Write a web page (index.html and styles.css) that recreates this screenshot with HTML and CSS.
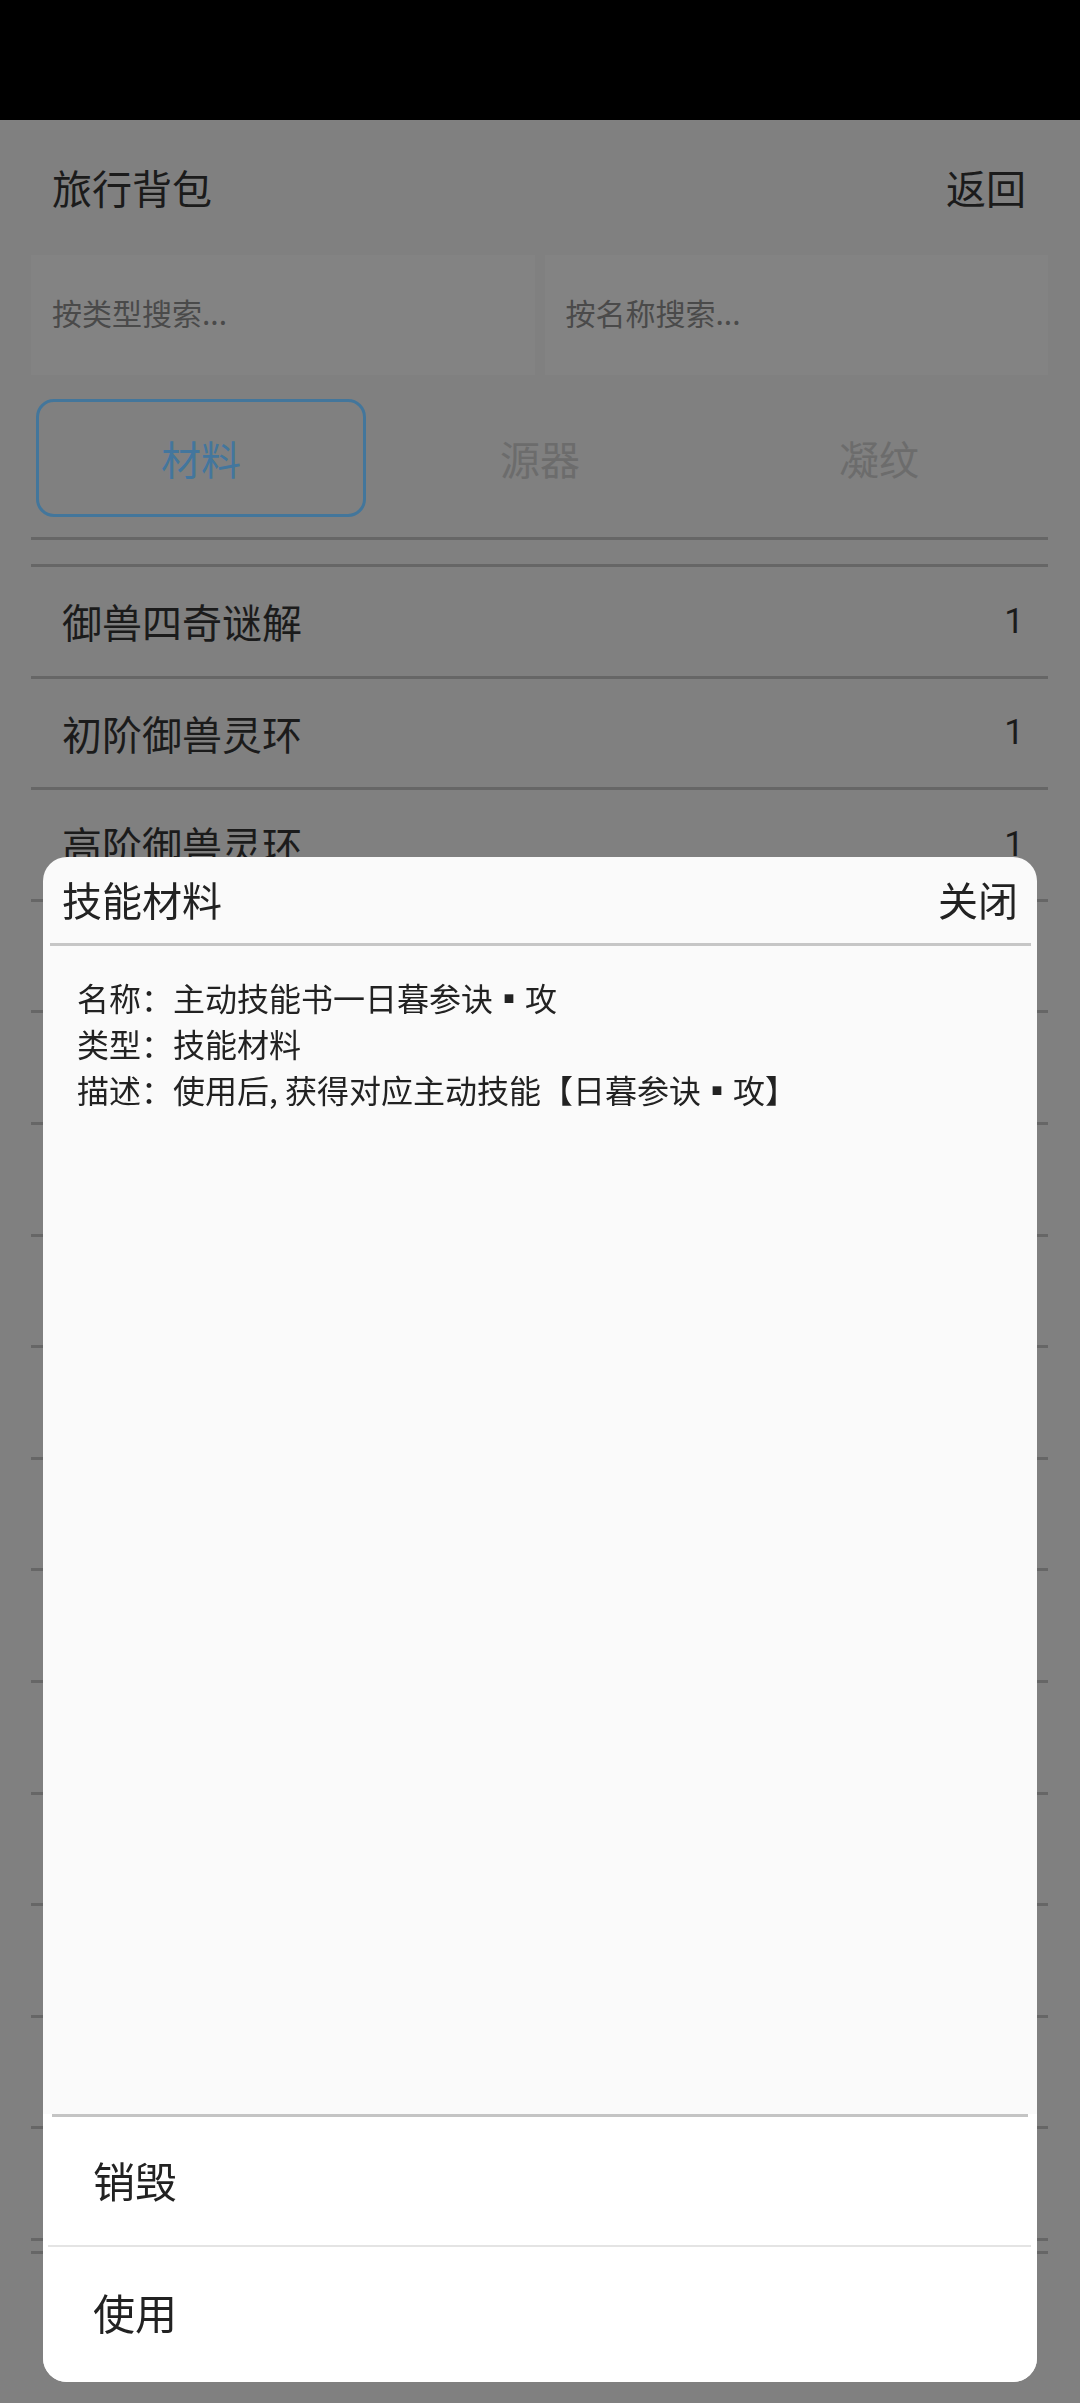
FILE: index.html
```html
<!DOCTYPE html>
<html lang="zh-CN">
<head>
<meta charset="utf-8">
<title>旅行背包</title>
<link rel="stylesheet" href="styles.css">
</head>
<body>
<div class="statusbar"></div>
<main class="page">
  <header class="topbar">
    <h1 class="title">旅行背包</h1>
    <span class="back">返回</span>
  </header>
  <div class="searches">
    <div class="search">按类型搜索...</div>
    <div class="search">按名称搜索...</div>
  </div>
  <nav class="tabs">
    <div class="tab active">材料</div>
    <div class="tab">源器</div>
    <div class="tab">凝纹</div>
  </nav>
  <div class="list">
    <div class="row"><span>御兽四奇谜解</span><span class="count">1</span></div>
    <div class="row"><span>初阶御兽灵环</span><span class="count">1</span></div>
    <div class="row"><span>高阶御兽灵环</span><span class="count">1</span></div>
    <div class="row"></div>
    <div class="row"></div>
    <div class="row"></div>
    <div class="row"></div>
    <div class="row"></div>
    <div class="row"></div>
    <div class="row"></div>
    <div class="row"></div>
    <div class="row"></div>
    <div class="row"></div>
    <div class="row"></div>
    <div class="row"></div>
  </div>
  <div class="list-end"></div>
</main>

<div class="sheet">
  <div class="sheet-head">
    <span>技能材料</span>
    <span class="close">关闭</span>
  </div>
  <div class="sheet-body">
    <p class="info">名称：主动技能书一日暮参诀▪攻</p>
    <p class="info">类型：技能材料</p>
    <p class="info">描述：使用后, 获得对应主动技能【日暮参诀▪攻】</p>
  </div>
  <div class="sheet-actions">
    <div class="action">销毁</div>
    <div class="action">使用</div>
  </div>
</div>
</body>
</html>
```

FILE: styles.css
```css
* { box-sizing: border-box; }

html, body {
  margin: 0;
  padding: 0;
}

body {
  background: #808080;
  font-family: "Noto Sans CJK SC", "Noto Sans", sans-serif;
  color: #1b1b1b;
  width: 1080px;
  height: 2403px;
  overflow: hidden;
}

.statusbar {
  height: 120px;
  background: #000;
}

.page {
  display: flex;
  flex-direction: column;
}

.topbar {
  height: 135px;
  display: flex;
  align-items: center;
  justify-content: space-between;
  padding: 0 54px 2px 52px;
}

.title {
  margin: 0;
  font-size: 40px;
  font-weight: 400;
  line-height: 1;
}

.back {
  font-size: 40px;
  line-height: 1;
}

.searches {
  display: flex;
  gap: 10px;
  padding: 0 32px 0 31px;
}

.search {
  flex: 1;
  height: 120px;
  background: #838383;
  display: flex;
  align-items: center;
  padding: 0 0 6px 21px;
  font-size: 30px;
  color: #4a4a4a;
}

.tabs {
  display: flex;
  padding: 0 32px 0 31px;
  margin-top: 24px;
}

.tab {
  flex: 1;
  height: 118px;
  margin: 0 4px 0 5px;
  border: 3px solid transparent;
  border-radius: 18px;
  display: flex;
  align-items: center;
  justify-content: center;
  font-size: 40px;
  color: #6c6c6c;
}

.tab.active {
  border-color: #43769b;
  color: #43769d;
}

.list {
  margin: 20px 32px 0 31px;
  border-top: 3px solid #666;
  padding-top: 24px;
}

.list::before {
  content: "";
  display: block;
  height: 3px;
  background: #666;
}

.row {
  height: 111.6px;
  border-bottom: 3px solid #666;
  display: flex;
  align-items: center;
  justify-content: space-between;
  padding: 0 24px 0 31px;
  font-size: 40px;
}

.count {
  font-family: Roboto, "Noto Sans", sans-serif;
  font-size: 35px;
}

.list-end {
  margin: 10px 32px 0 31px;
  height: 3px;
  background: #666;
}

/* bottom sheet dialog overlaying the list */
.sheet {
  position: fixed;
  left: 43px;
  right: 43px;
  top: 857px;
  bottom: 21px;
  background: #fafafa;
  border-radius: 24px;
  overflow: hidden;
  display: flex;
  flex-direction: column;
  color: #222;
}

.sheet-head {
  height: 89px;
  flex: none;
  display: flex;
  align-items: center;
  justify-content: space-between;
  padding: 0 13px 3px 12px;
  margin: 0 6px 0 7px;
  font-size: 40px;
  border-bottom: 3px solid #c6c6c6;
}

.sheet-body {
  flex: 1;
  padding: 28px 0 0 34px;
}

.info {
  margin: 0;
  font-size: 32px;
  line-height: 46px;
}

.sheet-actions {
  flex: none;
  background: #fff;
  display: flex;
  flex-direction: column;
}

.sheet-actions::before {
  content: "";
  display: block;
  height: 3px;
  margin: 0 9px;
  background: #c4c4c4;
}

.action {
  display: flex;
  align-items: center;
  padding: 0 0 4px 50px;
  font-size: 42px;
  height: 128px;
}

.action + .action {
  height: 137px;
  border-top: 2px solid #e4e4e4;
  margin: 0 6px 0 5px;
  padding: 0 0 6px 45px;
}
```
